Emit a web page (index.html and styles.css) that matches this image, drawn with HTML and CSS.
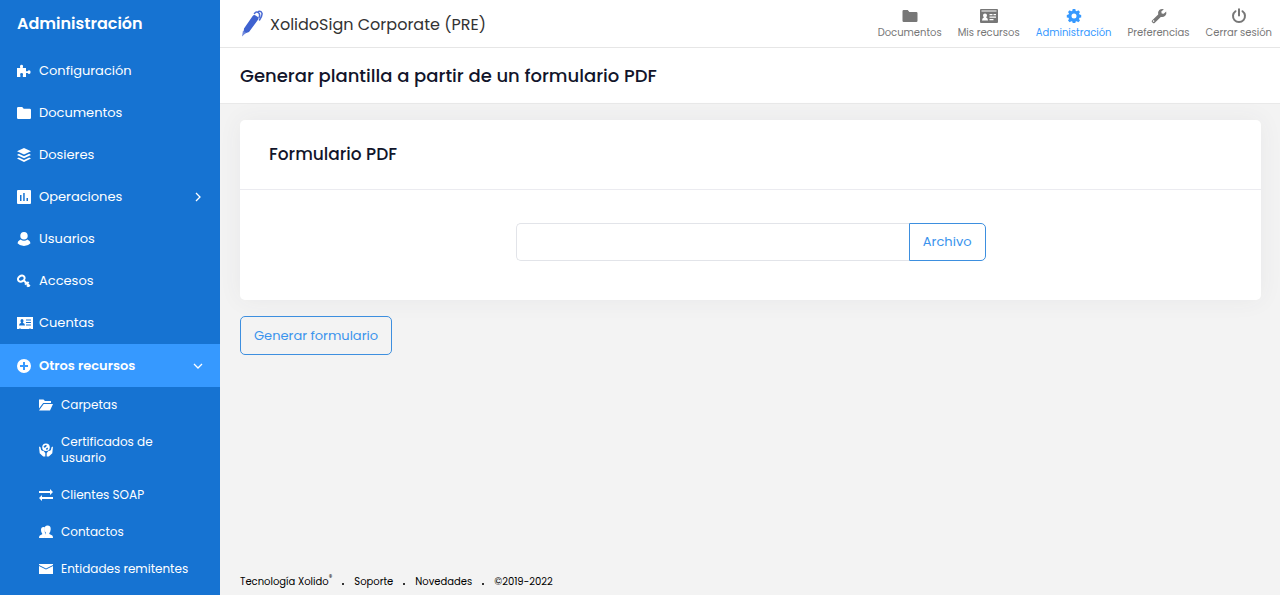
FILE: index.html
```html
<!DOCTYPE html>
<html lang="es">
<head>
<meta charset="utf-8">
<meta name="viewport" content="width=device-width, initial-scale=1">
<title>XolidoSign Corporate (PRE)</title>
<link rel="stylesheet" href="styles.css">
</head>
<body>
<aside class="sidebar">
  <h2 class="sidebar-title">Administración</h2>
  <nav aria-label="Administración">
    <ul class="menu">
      <li><a class="menu-link" href="#"><svg class="icon" viewBox="0 0 14 14"><path d="M0 4h3.300Q2.800 3 3.100 1.800a1.500 1.500 0 0 1 2.900 0Q6.200 3 5.700 4H9v3.200h1.600q.5-1 1.500-1 1.500.1 1.500 1.900t-1.500 1.900q-1 0-1.500-1H9V13H6q-.6-.8 0-2 .6-1.800-1.400-1.900-2 .1-1.400 1.900.6 1.200 0 2H0z"/></svg><span>Configuración</span></a></li>
      <li><a class="menu-link" href="#"><svg class="icon" viewBox="0 0 14 14"><path d="M1.200 1h4l1.500 1.700h6.100q1.200 0 1.200 1.200v7.900q0 1.200-1.200 1.200H1.200Q0 13 0 11.800V2.200Q0 1 1.200 1z"/></svg><span>Documentos</span></a></li>
      <li><a class="menu-link" href="#"><svg class="icon" viewBox="0 0 14 14"><path d="M7 0l7 3.300-7 3.300-7-3.300zM1.800 5.800L7 8.200l5.200-2.400L14 6.900l-7 3.300-7-3.300zM1.800 9.500L7 11.900l5.200-2.400 1.800 1.100L7 14l-7-3.400z"/></svg><span>Dosieres</span></a></li>
      <li><a class="menu-link" href="#"><svg class="icon" viewBox="0 0 14 14"><path fill-rule="evenodd" d="M1 0h12q1 0 1 1v12q0 1-1 1H1q-1 0-1-1V1q0-1 1-1zM3 5v6h1.500V5zM6.200 3v8h1.500V3zM9.500 8v3H11V8z"/></svg><span>Operaciones</span><svg class="chevron" viewBox="0 0 10 10"><path d="M3 1l4 4-4 4"/></svg></a></li>
      <li><a class="menu-link" href="#"><svg class="icon" viewBox="0 0 14 14"><ellipse cx="7" cy="3.800" rx="3.700" ry="3.800"/><path d="M3.500 7.500Q7 10 10.500 7.500 13.500 9 13.500 11.200 11 14 7 14T.5 11.200Q.5 9 3.500 7.500z"/></svg><span>Usuarios</span></a></li>
      <li><a class="menu-link" href="#"><svg class="icon" viewBox="0 0 14 14"><g class="stroke"><ellipse cx="4.300" cy="4.600" rx="3.500" ry="2.800" transform="rotate(-35 4.300 4.600)"/><path d="M6.800 6.500l6 5.800M9.300 9l-1.200 1.600M11.300 11l-1.200 1.700M10 9.500l1.600-1.600"/></g></svg><span>Accesos</span></a></li>
      <li><a class="menu-link" href="#"><svg class="icon icon-card" viewBox="0 0 16 14"><path fill-rule="evenodd" d="M0 1h16v12h-2l-1-.8-1 .8H4l-1-.8-1 .8H0zM5 3Q3.500 3 3.500 4.800q0 1.300.8 1.900Q2 7.200 2 9.500h6Q8 7.200 5.700 6.700q.8-.6.8-1.900Q6.500 3 5 3zM9 3.500v1h5v-1zM9 6v1h5V6zM9 8.500v1h5v-1z"/></svg><span>Cuentas</span></a></li>
      <li>
        <a class="menu-link is-active" href="#" aria-expanded="true"><svg class="icon" viewBox="0 0 14 14"><path fill-rule="evenodd" d="M7 0a7 7 0 1 1 0 14A7 7 0 0 1 7 0zM6 3v3H3v2h3v3h2V8h3V6H8V3z"/></svg><span>Otros recursos</span><svg class="chevron" viewBox="0 0 10 10"><path d="M1 3l4 4 4-4"/></svg></a>
        <ul class="submenu">
          <li><a class="submenu-link" href="#"><svg class="icon" viewBox="0 0 14 14"><path d="M0 1.500h4.500L6 3h6v2H4.200L0 10.500zM4.700 6H14l-3 6.500H0z"/></svg><span>Carpetas</span></a></li>
          <li><a class="submenu-link" href="#"><svg class="icon" viewBox="0 0 14 14"><path fill-rule="evenodd" d="M7 .5a3.800 3.800 0 1 1 0 7.600A3.800 3.800 0 0 1 7 .5zM6.300 2L4.500 3.500l.7 1.300 1.500-.6L8 2.500zM8.500 4.500L7 5.500l.5 1.400 1.700-1z"/><path d="M0 3.600l1.500.6.6 2.700 1.400 1 .6-.4L6.300 10v3.500H4.200L.7 10.300zM14 3.600l-1.500.6-.6 2.700-1.400 1-.6-.4L7.700 10v3.500h2.100l3.500-3.200z"/></svg><span>Certificados de usuario</span></a></li>
          <li><a class="submenu-link" href="#"><svg class="icon" viewBox="0 0 14 14"><path d="M0 3h11V1l3 3-3 3V5H0zM14 11H3v2l-3-3 3-3v2h11z"/></svg><span>Clientes SOAP</span></a></li>
          <li><a class="submenu-link" href="#"><svg class="icon" viewBox="0 0 14 14"><path d="M8.500.5Q12 .5 11.700 4.400 11.400 7 10.300 8v1l3 1.500q.7.500.7 2.500H5q0-2.500 1-3l1-.7V8Q5.400 6.500 5.400 4 5.400.5 8.500.5z"/><path d="M4.800 2Q2 1.800 2 5q0 2.300 1.200 3.400v.9L.8 10.500Q0 11 0 13h5l2-3.700-1.200-2V2.300z"/></svg><span>Contactos</span></a></li>
          <li><a class="submenu-link" href="#"><svg class="icon" viewBox="0 0 14 14"><path d="M0 2h14v1L7 6.600 0 3zM0 3.900l7 3.600 7-3.600V12H0z"/></svg><span>Entidades remitentes</span></a></li>
        </ul>
      </li>
    </ul>
  </nav>
</aside>
<div class="page">
  <header class="topbar">
    <a class="brand" href="#">
      <svg class="brand-logo" viewBox="0 0 24 28"><path fill="#3f62d0" d="M4 18.500L12.500 6.200q1.500-2 3.500-.5l1.500 1q1.800 1.500.3 3.400L9 22 3.500 24z"/><path fill="#6f88dc" d="M3 20.500l3 2.300L2 26.500z"/><path fill="none" stroke="#4a6ad3" stroke-width="1.500" stroke-linecap="round" d="M14.500 3.500Q16.500 1 18.500 2.800t.5 4.700M18.500 1.500Q21 .8 22 3.200 22.500 5.500 19.500 10"/></svg>
      <span>XolidoSign Corporate (PRE)</span>
    </a>
    <nav class="topnav" aria-label="Principal">
      <a class="topnav-link" href="#"><svg class="topnav-icon" viewBox="0 0 16 16"><path d="M1.700 2h4l1.700 2h6.900q1.200 0 1.200 1.200v7.600q0 1.200-1.200 1.200H1.700Q.5 14 .5 12.800V3.200Q.5 2 1.700 2z"/></svg><span>Documentos</span></a>
      <a class="topnav-link" href="#"><svg class="topnav-icon topnav-icon-wide" viewBox="0 0 20 16"><path fill-rule="evenodd" d="M2 1h16q1 0 1 1v12q0 1-1 1H2q-1 0-1-1V2q0-1 1-1zM2.500 2.500v1h15v-1zM3 12.500h6Q9 10 7 9.300 8 8.700 8 7.300 8 5.500 6 5.500T4 7.300Q4 8.700 5 9.300 3 10 3 12.500zM10.500 6v1.200h3V6zM14.500 6v1.200H17V6zM10.500 8.500v1.200H17V8.500zM10.500 11v1.200h4V11z"/></svg><span>Mis recursos</span></a>
      <a class="topnav-link is-current" href="#" aria-current="page"><svg class="topnav-icon" viewBox="0 0 16 16"><path fill-rule="evenodd" d="M6.700 1h2.600l.4 1.800 1.100.4 1.500-1 1.700 1.700-1 1.600.5 1.100 1.700.3v2.500l-1.700.4-.5 1.100 1 1.500-1.700 1.800-1.500-1-1.100.4L9.300 15H6.700l-.4-1.400-1.100-.4-1.500 1L2 12.400l1-1.500-.5-1.100-1.700-.4V6.900l1.700-.3.500-1.100-1-1.600 1.700-1.700 1.500 1 1.100-.4zM8 5.600a2.500 2.500 0 1 0 0 5 2.500 2.500 0 0 0 0-5z"/></svg><span>Administración</span></a>
      <a class="topnav-link" href="#"><svg class="topnav-icon" viewBox="0 0 16 16"><path fill-rule="evenodd" d="M1 12.600L7.200 6.400Q6.500 3.800 8.300 2.100 10.200.4 12.900 1.200L10.300 3.600l.4 1.900 2 .3 2.500-2.300q.7 2.500-1 4.300-1.800 1.700-4.400 1.100L3.600 15q-.8.700-1.700 0l-.9-.9q-.7-.8 0-1.500zM2.800 12.300a.8.800 0 1 0 .1 1.500.8.800 0 0 0-.1-1.500z"/></svg><span>Preferencias</span></a>
      <a class="topnav-link" href="#"><svg class="topnav-icon" viewBox="0 0 16 16"><path fill="none" stroke="currentColor" stroke-width="2" stroke-linecap="round" d="M4.500 3.200a6 6 0 1 0 7 0M8 1.200v6.300"/></svg><span>Cerrar sesión</span></a>
    </nav>
  </header>
  <div class="page-heading"><h1>Generar plantilla a partir de un formulario PDF</h1></div>
  <main class="content">
    <section class="card">
      <h2 class="card-title"><label for="pdf-file">Formulario PDF</label></h2>
      <div class="card-body">
        <div class="file-group">
          <input class="file-input" id="pdf-file" type="text">
          <button class="button file-button" type="button">Archivo</button>
        </div>
      </div>
    </section>
    <button class="button" type="button">Generar formulario</button>
  </main>
  <footer class="footer">
    <a href="#">Tecnología Xolido<sup>®</sup></a><i class="dot"></i><a href="#">Soporte</a><i class="dot"></i><a href="#">Novedades</a><i class="dot"></i><span>©2019-2022</span>
  </footer>
</div>
</body>
</html>
```
FILE: styles.css
```css
* { box-sizing: border-box; }

body {
  display: flex;
  min-height: 100vh;
  margin: 0;
  background: #f3f3f3;
  color: #12152b;
  font-family: Poppins, Inter, "Open Sans", sans-serif;
  font-size: 13px;
}

a { color: inherit; text-decoration: none; }
h1, h2 { margin: 0; }
ul { margin: 0; padding: 0; list-style: none; }
svg { flex: none; fill: currentColor; }

.sidebar {
  flex: none;
  width: 220px;
  background: #1673d2;
  color: #fff;
}

.sidebar-title {
  padding: 12px 17px 14px;
  font-size: 16px;
  font-weight: 600;
  line-height: 24px;
}

.menu-link {
  display: flex;
  align-items: center;
  gap: 8px;
  height: 42px;
  padding: 0 17px;
}

.menu-link.is-active {
  height: 43px;
  background: #3699ff;
  font-weight: 600;
}

.icon { width: 14px; height: 14px; }
.icon-card { width: 16px; margin-right: -2px; }

.stroke {
  fill: none;
  stroke: currentColor;
  stroke-width: 2;
}

.chevron {
  width: 10px;
  height: 10px;
  margin-left: auto;
  fill: none;
  stroke: currentColor;
  stroke-width: 1.3;
}

.submenu {
  display: grid;
  gap: 1px;
}

.submenu-link {
  display: flex;
  align-items: center;
  gap: 8px;
  padding: 10px 24px 10px 39px;
  font-size: 12px;
  line-height: 16px;
}

.page {
  display: flex;
  flex: 1;
  flex-direction: column;
  min-width: 0;
}

.topbar {
  display: flex;
  align-items: center;
  justify-content: space-between;
  height: 48px;
  padding: 1px 8px 0 20px;
  border-bottom: 1px solid #e6e6e6;
  background: #fff;
}

.brand {
  display: flex;
  align-items: center;
  gap: 6px;
  color: #333;
  font-size: 16px;
}

.brand-logo { width: 24px; height: 28px; }

.topnav { display: flex; gap: 16px; }

.topnav-link {
  display: flex;
  flex-direction: column;
  align-items: center;
  gap: 1px;
  color: #777;
  font-size: 10px;
  line-height: 16px;
}

.topnav-link.is-current { color: #3699ff; }
.topnav-icon { width: 16px; height: 16px; }
.topnav-icon-wide { width: 20px; }

.page-heading {
  padding: 16px 20px 15px;
  border-bottom: 1px solid #e9e9e9;
  background: #fff;
}

.page-heading h1 {
  font-size: 18px;
  font-weight: 500;
  line-height: 24px;
}

.content {
  flex: 1;
  padding: 16px 19px 16px 20px;
}

.card {
  margin-bottom: 16px;
  border-radius: 5px;
  background: #fff;
  box-shadow: 0 0 24px rgba(60, 60, 80, 0.06);
}

.card-title {
  padding: 22px 29px 23px;
  border-bottom: 1px solid #ebebf0;
  font-size: 17px;
  font-weight: 500;
  line-height: 24px;
}

.card-body {
  display: flex;
  justify-content: center;
  padding: 33px 29px 39px;
}

.file-group { display: flex; width: 470px; }

.file-input {
  flex: 1;
  min-width: 0;
  padding: 0 12px;
  border: 1px solid #e2e4e9;
  border-right: 0;
  border-radius: 5px 0 0 5px;
  font: inherit;
}

.button {
  height: 39px;
  padding: 0 13px;
  border: 1px solid #3d8fdf;
  border-radius: 5px;
  background: transparent;
  color: #3b94ed;
  font: inherit;
}

.file-button {
  height: 38px;
  border-radius: 0 5px 5px 0;
}

.footer {
  display: flex;
  align-items: center;
  gap: 10px;
  padding: 0 20px 5px;
  color: #000;
  font-size: 10px;
  line-height: 16px;
}

.footer sup {
  font-size: 7px;
  line-height: 0;
  vertical-align: 5px;
}

.dot {
  width: 2px;
  height: 2px;
  margin-top: 4px;
  background: #333;
}
```
